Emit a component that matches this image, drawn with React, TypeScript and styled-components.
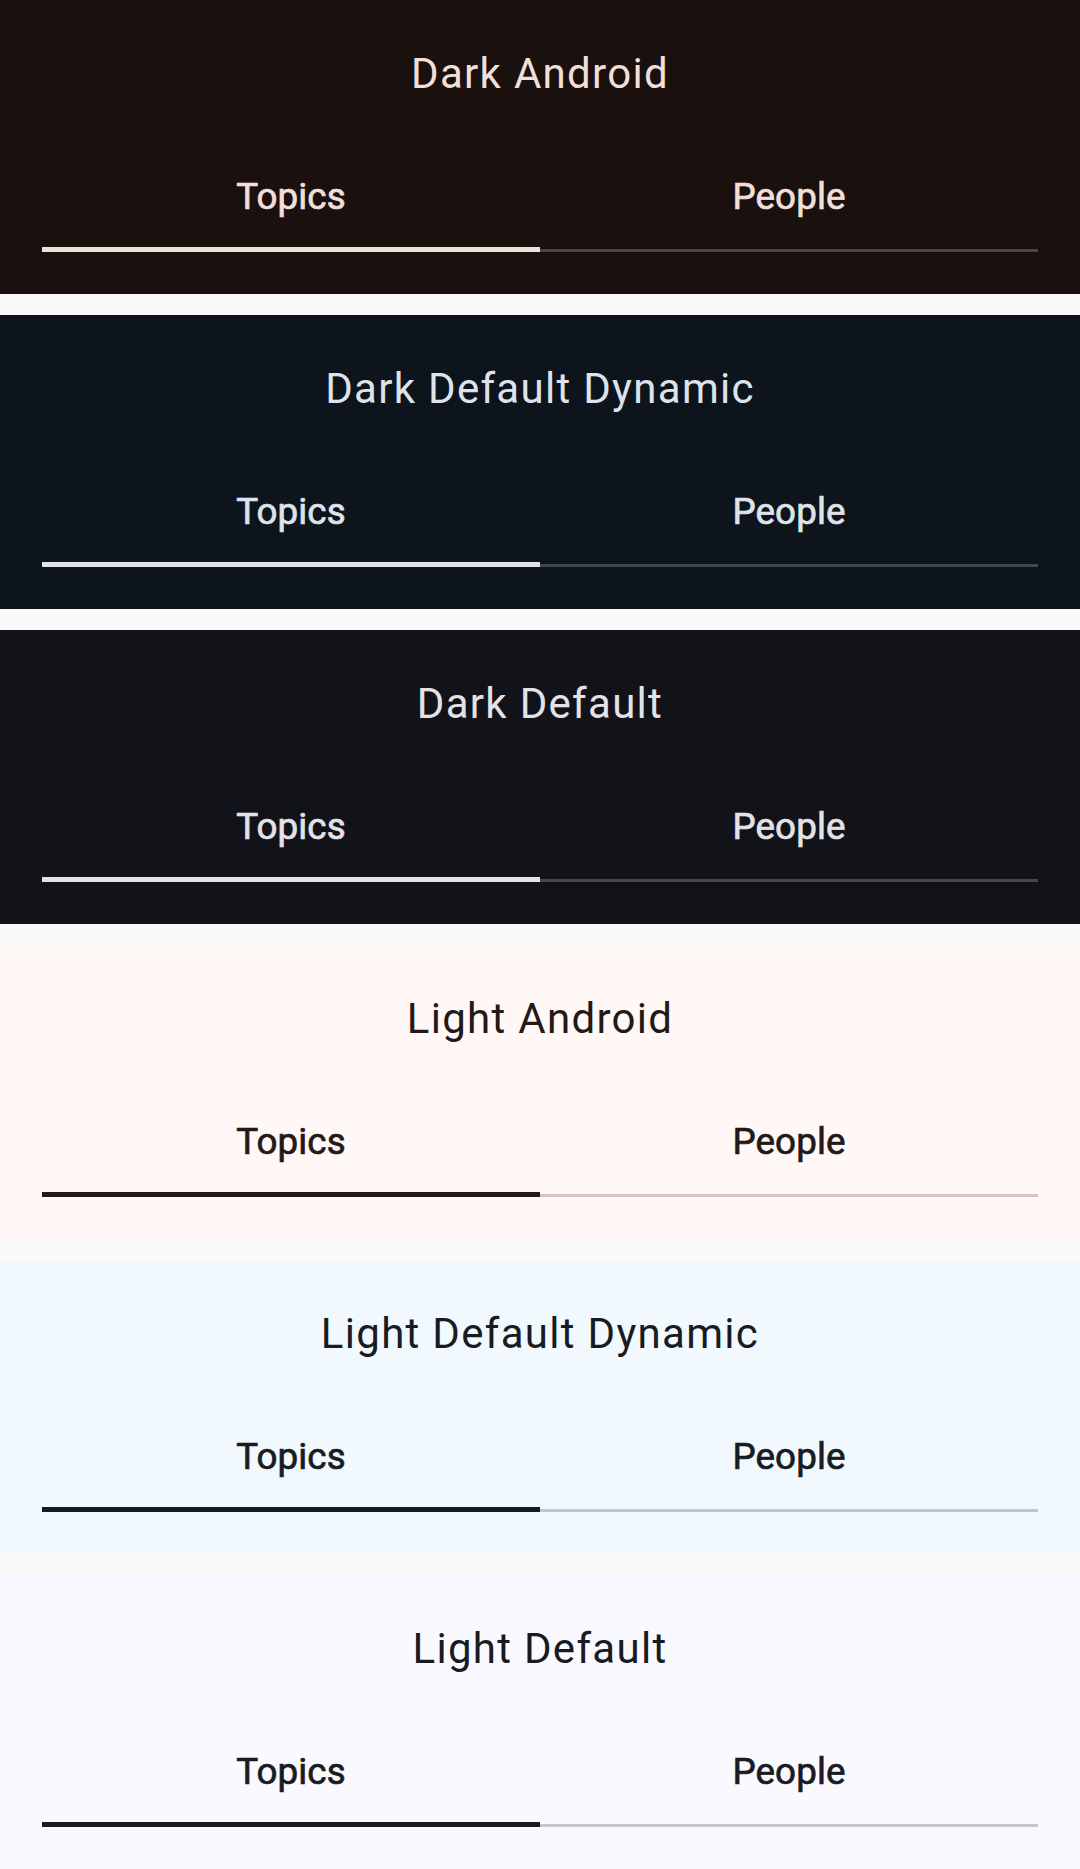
import React from "react";
import styled, { createGlobalStyle } from "styled-components";

const GlobalStyle = createGlobalStyle`
  html, body {
    margin: 0;
    padding: 0;
    background: #f9f9f9;
  }
  body {
    font-family: Roboto, "Noto Sans", "Liberation Sans", sans-serif;
    -webkit-font-smoothing: antialiased;
  }
`;

type Scheme = {
  name: string;
  bg: string;
  fg: string;
  divider: string;
};

const schemes: Scheme[] = [
  { name: "Dark Android", bg: "#1a110f", fg: "#f1dfda", divider: "#534341" },
  { name: "Dark Default Dynamic", bg: "#0d141b", fg: "#dee3eb", divider: "#41484d" },
  { name: "Dark Default", bg: "#121318", fg: "#e3e2e9", divider: "#45464f" },
  { name: "Light Android", bg: "#fff8f6", fg: "#231918", divider: "#d8c2bf" },
  { name: "Light Default Dynamic", bg: "#f1f8fe", fg: "#171c22", divider: "#c1c7ce" },
  { name: "Light Default", bg: "#f9f9ff", fg: "#1a1b20", divider: "#c5c6d0" },
];

const Page = styled.div`
  display: flex;
  flex-direction: column;
  gap: 21px;
  width: 1080px;
  background: #f9f9f9;
`;

const Section = styled.section<{ $bg: string; $fg: string }>`
  box-sizing: border-box;
  height: 294px;
  padding: 50px 42px 42px;
  background: ${(p) => p.$bg};
  color: ${(p) => p.$fg};
  display: flex;
  flex-direction: column;
`;

const Title = styled.h2`
  margin: 0;
  height: 48px;
  font-size: 42px;
  line-height: 48px;
  font-weight: 400;
  letter-spacing: 1.3px;
  text-align: center;
`;

const TabRow = styled.div`
  margin-top: 28px;
  display: grid;
  grid-template-columns: 1fr 1fr;
  height: 126px;
`;

const Tab = styled.div`
  display: flex;
  flex-direction: column;
  align-items: center;
  justify-content: flex-end;
`;

const TabLabel = styled.span`
  font-family: Roboto, "Noto Sans", sans-serif;
  font-size: 36.75px;
  line-height: 44px;
  font-weight: 400;
  letter-spacing: 0.1px;
  -webkit-text-stroke: 0.7px currentColor;
  margin-bottom: 28px;
`;

const TabBar = styled.div<{ $active: boolean; $color: string }>`
  align-self: stretch;
  box-sizing: border-box;
  height: 5px;
  border-bottom: ${(p) => (p.$active ? "5px" : "3px")} solid ${(p) => p.$color};
`;

const tabs = ["Topics", "People"];

export default function App() {
  return (
    <>
      <GlobalStyle />
      <Page>
        {schemes.map((s) => (
          <Section key={s.name} $bg={s.bg} $fg={s.fg}>
            <Title>{s.name}</Title>
            <TabRow>
              {tabs.map((t, i) => (
                <Tab key={t}>
                  <TabLabel>{t}</TabLabel>
                  <TabBar $active={i === 0} $color={i === 0 ? s.fg : s.divider} />
                </Tab>
              ))}
            </TabRow>
          </Section>
        ))}
      </Page>
    </>
  );
}
